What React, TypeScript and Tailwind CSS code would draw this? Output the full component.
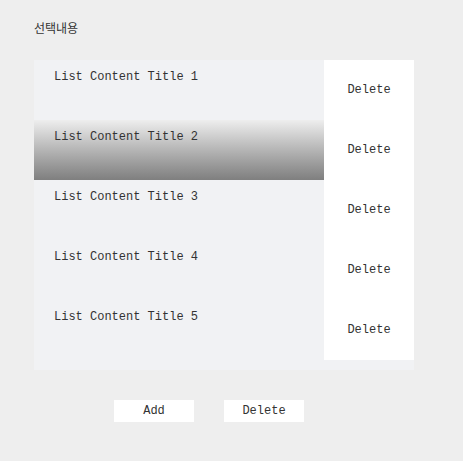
import React from 'react';

const items = [1, 2, 3, 4, 5].map((n) => `List Content Title ${n}`);

export default function App() {
  const selected = 1;
  return (
    <div className="min-h-[461px] w-full bg-[#eeeeee] pt-[21px] font-['Liberation_Mono',monospace] text-[12px] text-[#333]">
      <h2 className="ml-[34px] font-['Noto_Sans_CJK_KR',sans-serif] text-[12px] leading-[14px] font-normal text-[#333]">
        선택내용
      </h2>

      {/* List */}
      <div className="ml-[34px] mt-[25px] flex w-[380px] bg-[#f1f2f4] pb-[10px]">
        <ul className="w-[290px]">
          {items.map((title, i) => (
            <li
              key={title}
              className={`h-[60px] pl-[20px] pt-[10px] leading-[14px] ${
                i === selected ? 'bg-gradient-to-b from-[#eeeeee] to-[#7f7f7f]' : ''
              }`}
            >
              {title}
            </li>
          ))}
        </ul>
        <div className="w-[90px] bg-white">
          {items.map((title) => (
            <div key={title} className="flex h-[60px] items-center justify-center">
              <button className="leading-[14px]">Delete</button>
            </div>
          ))}
        </div>
      </div>

      {/* Actions */}
      <div className="ml-[114px] mt-[30px] flex gap-[30px]">
        <button className="h-[22px] w-[80px] bg-white leading-[22px]">Add</button>
        <button className="h-[22px] w-[80px] bg-white leading-[22px]">Delete</button>
      </div>
    </div>
  );
}
